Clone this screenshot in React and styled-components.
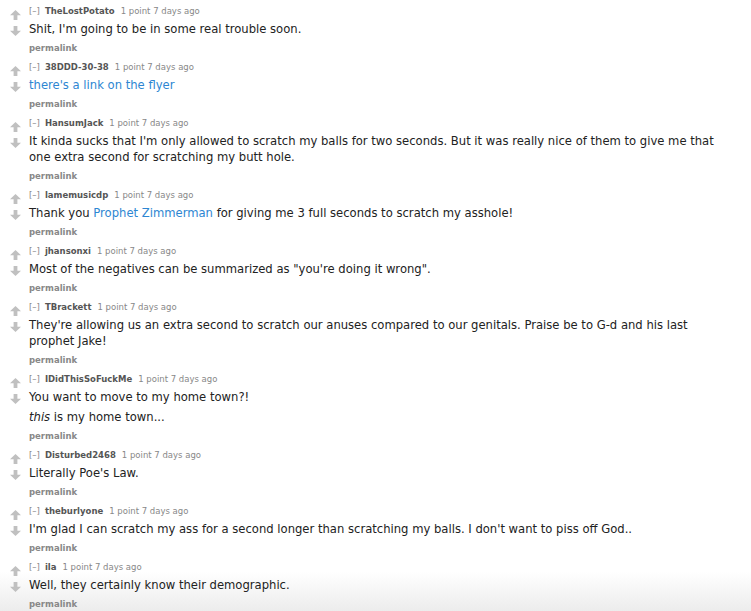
import styled, { createGlobalStyle } from 'styled-components'

const GlobalStyle = createGlobalStyle`
  html, body {
    margin: 0;
    padding: 0;
  }
  body {
    min-height: 611px;
    background: linear-gradient(to bottom, #fff 0, #fff 572px, #ececec 611px);
    font-family: 'DejaVu Sans', Verdana, sans-serif;
    color: #222;
  }
`

const Page = styled.div`
  padding: 4px 0 0 10px;
`
const Comment = styled.div`
  display: flex;
  padding-bottom: 5px;
`
const Votes = styled.div`
  display: flex;
  flex-direction: column;
  align-items: center;
  gap: 6px;
  width: 11px;
  padding-top: 6px;
  margin-right: 8px;
`
const Entry = styled.div`
  flex: 1;
  min-width: 0;
`
const Tagline = styled.div`
  font-size: 8.5px;
  line-height: 14px;
  color: #888;
`
const Author = styled.span`
  font-weight: bold;
  color: #555;
  margin: 0 6px 0 5px;
`
const Body = styled.div`
  margin: 3px 0 4px;
  font-size: 11.6px;
  line-height: 16px;
  color: #222;
  padding-right: 20px;
`
const Para = styled.p`
  margin: 0;
  & + & {
    margin-top: 4px;
  }
`
const Link = styled.a`
  color: #2d86d2;
  text-decoration: none;
`
const Permalink = styled.a`
  display: block;
  font-size: 8.5px;
  line-height: 14px;
  font-weight: bold;
  color: #888;
  text-decoration: none;
`

const Arrow = ({ down }) => (
  <svg width="11" height="10" viewBox="0 0 11 10" style={down ? { transform: 'rotate(180deg)' } : undefined}>
    <path d="M5.5 0 L11 5.2 L7.4 5.2 L7.4 10 L3.6 10 L3.6 5.2 L0 5.2 Z" fill="#c0c0c0" />
  </svg>
)

const comments = [
  { author: 'TheLostPotato', body: [["Shit, I'm going to be in some real trouble soon."]] },
  { author: '38DDD-30-38', body: [[{ link: "there's a link on the flyer" }]] },
  {
    author: 'HansumJack',
    body: [["It kinda sucks that I'm only allowed to scratch my balls for two seconds. But it was really nice of them to give me that one extra second for scratching my butt hole."]],
  },
  {
    author: 'lamemusicdp',
    body: [['Thank you ', { link: 'Prophet Zimmerman' }, ' for giving me 3 full seconds to scratch my asshole!']],
  },
  { author: 'jhansonxi', body: [['Most of the negatives can be summarized as "you\'re doing it wrong".']] },
  {
    author: 'TBrackett',
    body: [['They\'re allowing us an extra second to scratch our anuses compared to our genitals. Praise be to G-d and his last prophet Jake!']],
  },
  {
    author: 'IDidThisSoFuckMe',
    body: [['You want to move to my home town?!'], [{ em: 'this' }, ' is my home town...']],
  },
  { author: 'Disturbed2468', body: [["Literally Poe's Law."]] },
  {
    author: 'theburlyone',
    body: [["I'm glad I can scratch my ass for a second longer than scratching my balls. I don't want to piss off God.."]],
  },
  { author: 'ila', body: [['Well, they certainly know their demographic.']] },
]

const renderPart = (part, i) => {
  if (typeof part === 'string') return part
  if (part.link) return <Link key={i} href="#">{part.link}</Link>
  return <em key={i}>{part.em}</em>
}

const App = () => (
  <Page>
    <GlobalStyle />
    {comments.map((c) => (
      <Comment key={c.author}>
        <Votes>
          <Arrow />
          <Arrow down />
        </Votes>
        <Entry>
          <Tagline>
            [–]<Author>{c.author}</Author>1 point 7 days ago
          </Tagline>
          <Body>
            {c.body.map((p, i) => (
              <Para key={i}>{p.map(renderPart)}</Para>
            ))}
          </Body>
          <Permalink href="#">permalink</Permalink>
        </Entry>
      </Comment>
    ))}
  </Page>
)

export default App
